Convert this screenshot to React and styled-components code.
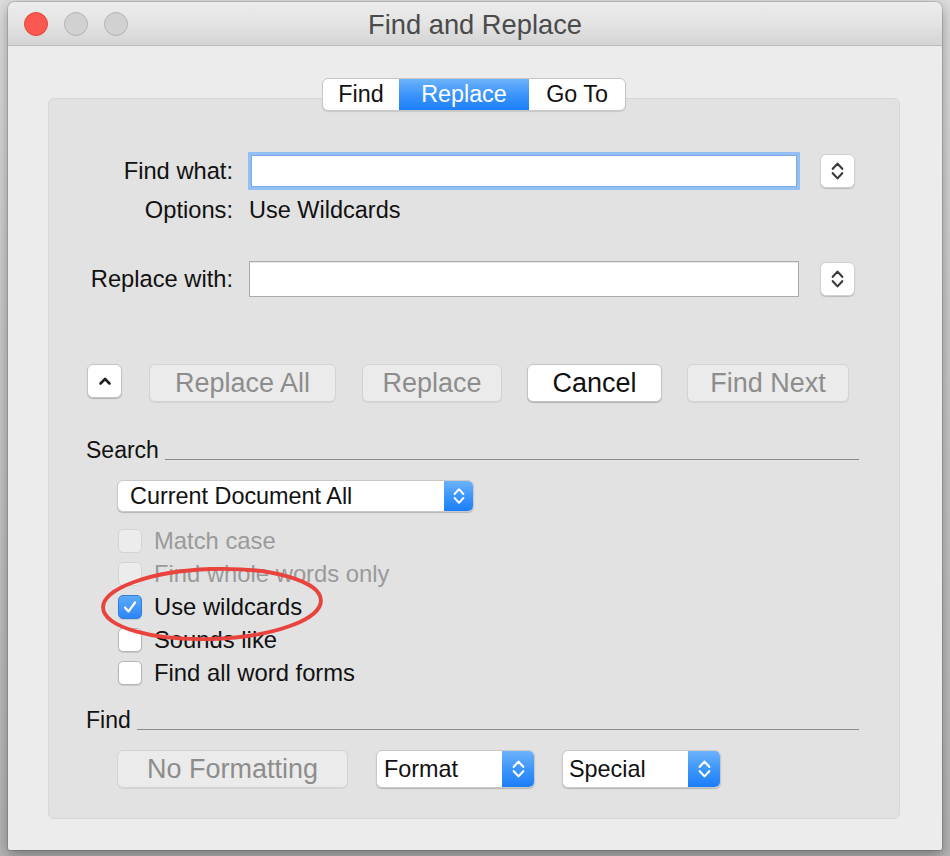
import React from 'react';
import styled, { createGlobalStyle } from 'styled-components';

const Global = createGlobalStyle`
  html, body { margin: 0; padding: 0; }
  body {
    width: 950px; height: 856px; overflow: hidden;
    background: linear-gradient(180deg, #dcdcdc 0%, #c9c9c9 40%, #b4b4b4 100%);
    font-family: "Liberation Sans", Arial, sans-serif;
    -webkit-font-smoothing: antialiased;
  }
`;

const Page = styled.div`
  width: 950px;
  height: 856px;
  box-sizing: border-box;
  padding: 2px 0 0 8px;
`;

const Window = styled.div`
  width: 934px;
  background: #ececec;
  border-radius: 7px 7px 2px 2px;
  box-shadow: 0 0 0 1px rgba(0,0,0,0.12), 0 5px 14px rgba(0,0,0,0.35);
  display: flex;
  flex-direction: column;
  overflow: hidden;
`;

const TitleBar = styled.div`
  height: 43px;
  border-bottom: 1px solid #bababa;
  background: linear-gradient(180deg, #ececec 0%, #e4e4e4 50%, #d4d4d4 100%);
  display: grid;
  grid-template-columns: 1fr auto 1fr;
  align-items: center;
  padding: 0 16px;
`;

const Lights = styled.div`
  display: flex;
  gap: 16px;
`;

const Light = styled.span`
  width: 24px;
  height: 24px;
  border-radius: 50%;
  box-sizing: border-box;
  background: ${p => p.$fill};
  border: 1px solid ${p => p.$edge};
`;

const Title = styled.div`
  font-size: 27.3px;
  color: #4b4b4b;
  margin-top: 2px;
`;

const Content = styled.div`
  padding: 32px 42px 31px 40px;
  display: flex;
  flex-direction: column;
`;

const Tabs = styled.div`
  align-self: center;
  position: relative;
  z-index: 1;
  display: flex;
  height: 33px;
  box-sizing: border-box;
  border: 1px solid #c6c6c6;
  border-radius: 6px;
  background: #fff;
  overflow: hidden;
  box-shadow: 0 1px 1px rgba(0,0,0,0.12);
`;

const Tab = styled.div`
  width: ${p => p.$w}px;
  display: flex;
  align-items: center;
  justify-content: center;
  font-size: 23.3px;
  color: ${p => (p.$active ? '#fff' : '#111')};
  background: ${p => (p.$active ? 'linear-gradient(180deg, #6db3fb 0%, #3c95fa 50%, #1c7ff9 100%)' : 'transparent')};
`;

const Panel = styled.div`
  margin-top: -13px;
  background: #e2e2e2;
  border: 1px solid #d7d7d7;
  border-radius: 6px;
  padding: 53px 40px 30px 38px;
  display: flex;
  flex-direction: column;
`;

const FieldRow = styled.div`
  display: flex;
  align-items: center;
  height: ${p => p.$h}px;
  margin-top: ${p => p.$mt || 0}px;
`;

const FieldLabel = styled.div`
  width: 146px;
  text-align: right;
  font-size: 23.7px;
  color: #111;
  white-space: nowrap;
`;

const FieldValue = styled.div`
  margin-left: 16px;
  font-size: 23.5px;
  color: #111;
`;

const TextField = styled.div`
  box-sizing: border-box;
  background: #fff;
  margin-left: ${p => (p.$focus ? 15 : 16)}px;
  width: ${p => (p.$focus ? 552 : 550)}px;
  height: ${p => (p.$focus ? 38 : 36)}px;
  border: ${p => (p.$focus ? '3px solid #94bff2' : '1px solid #ababab')};
  box-shadow: ${p => (p.$focus ? 'inset 0 0 0 1px #78aceb' : 'inset 0 1px 0 #e8e8e8')};
`;

const Stepper = styled.div`
  margin-left: ${p => p.$ml}px;
  width: 35px;
  height: 34px;
  box-sizing: border-box;
  background: #fff;
  border: 1px solid #cfcfcf;
  border-radius: 6px;
  box-shadow: 0 1px 1px rgba(0,0,0,0.18);
  display: flex;
  align-items: center;
  justify-content: center;
  color: #3a3a3a;
`;

const ButtonRow = styled.div`
  display: flex;
  align-items: flex-start;
  margin-top: 67px;
`;

const PushButton = styled.div`
  box-sizing: border-box;
  width: ${p => p.$w}px;
  height: ${p => p.$h || 38}px;
  margin-left: ${p => p.$ml || 0}px;
  display: flex;
  align-items: center;
  justify-content: center;
  font-size: ${p => p.$fs || 27}px;
  border-radius: 6px;
  color: ${p => (p.$disabled ? '#8d8d8d' : '#111')};
  background: ${p => (p.$disabled ? '#ebebeb' : '#fff')};
  border: 1px solid ${p => (p.$disabled ? '#d3d3d3' : '#c4c4c4')};
  box-shadow: ${p => (p.$disabled ? '0 1px 0 rgba(0,0,0,0.06)' : '0 1px 1px rgba(0,0,0,0.22)')};
`;

const SectionHeader = styled.div`
  display: flex;
  height: 28px;
  margin-top: ${p => p.$mt}px;
  margin-left: -1px;
  font-size: 23px;
  color: #111;
  align-items: center;
`;

const HeaderRule = styled.div`
  flex: 1;
  align-self: flex-end;
  height: 1px;
  background: #8c8c8c;
  margin: 0 0 4px 6px;
`;

const Select = styled.div`
  box-sizing: border-box;
  width: ${p => p.$w}px;
  height: ${p => p.$h}px;
  margin-left: ${p => p.$ml || 0}px;
  margin-top: ${p => p.$mt || 0}px;
  display: flex;
  align-items: stretch;
  background: #fff;
  border: 1px solid #c9c9c9;
  border-radius: 6px;
  box-shadow: 0 1px 1px rgba(0,0,0,0.2);
  overflow: hidden;
`;

const SelectText = styled.div`
  flex: 1;
  display: flex;
  align-items: center;
  padding-left: ${p => p.$pl}px;
  font-size: 23.4px;
  color: #111;
`;

const SelectArrows = styled.div`
  width: ${p => p.$bw}px;
  display: flex;
  align-items: center;
  justify-content: center;
  color: #fff;
  background: linear-gradient(180deg, #6cb2fb 0%, #3d96fa 50%, #1b7ef9 100%);
`;

const CheckList = styled.div`
  position: relative;
  margin-top: 12px;
  padding-left: 31px;
  display: flex;
  flex-direction: column;
`;

const CheckRow = styled.div`
  height: 33px;
  display: flex;
  align-items: center;
  font-size: 23.8px;
  color: ${p => (p.$disabled ? '#9a9a9a' : '#111')};
`;

const Box = styled.div`
  box-sizing: border-box;
  width: 24px;
  height: 24px;
  margin-right: 12px;
  border-radius: 5px;
  display: flex;
  align-items: center;
  justify-content: center;
  background: ${p => (p.$checked ? 'linear-gradient(180deg, #5eaafb 0%, #2c86f7 100%)' : p.$disabled ? '#ececec' : '#fff')};
  border: 1px solid ${p => (p.$checked ? '#2f7fe0' : p.$disabled ? '#d4d4d4' : '#b6b6b6')};
  box-shadow: ${p => (p.$disabled ? 'none' : '0 1px 1px rgba(0,0,0,0.12)')};
`;

const Annotation = styled.svg`
  position: absolute;
  left: 10px;
  top: 36px;
  pointer-events: none;
  overflow: visible;
`;

const BottomRow = styled.div`
  display: flex;
  align-items: center;
  margin-top: 16px;
  padding-left: 30px;
`;

const UpDown = ({ w = 13, h = 22, sw = 2 }) => (
  <svg width={w} height={h} viewBox="0 0 12 20" fill="none" stroke="currentColor" strokeWidth={sw} strokeLinecap="round" strokeLinejoin="round">
    <path d="M1.6 8 L6 3.2 L10.4 8" />
    <path d="M1.6 12 L6 16.8 L10.4 12" />
  </svg>
);

const ChevronUp = () => (
  <svg width="14" height="10" viewBox="0 0 14 10" fill="none" stroke="#1e1e1e" strokeWidth="2.6" strokeLinecap="round" strokeLinejoin="round">
    <path d="M2.5 7.5 L7 3 L11.5 7.5" />
  </svg>
);

const Check = () => (
  <svg width="18" height="18" viewBox="0 0 18 18" fill="none" stroke="#fff" strokeWidth="2.2" strokeLinecap="round" strokeLinejoin="round">
    <path d="M4 9.5 L7.5 13.5 L14 4.5" />
  </svg>
);

const options = [
  { label: 'Match case', disabled: true },
  { label: 'Find whole words only', disabled: true },
  { label: 'Use wildcards', checked: true },
  { label: 'Sounds like' },
  { label: 'Find all word forms' },
];

export default function App() {
  return (
    <>
      <Global />
      <Page>
        <Window>
          <TitleBar>
            <Lights>
              <Light $fill="#fc5852" $edge="#e0443e" />
              <Light $fill="#d1d1d1" $edge="#b4b4b4" />
              <Light $fill="#d1d1d1" $edge="#b4b4b4" />
            </Lights>
            <Title>Find and Replace</Title>
            <span />
          </TitleBar>
          <Content>
            <Tabs>
              <Tab $w={76}>Find</Tab>
              <Tab $w={130} $active>Replace</Tab>
              <Tab $w={96}>Go To</Tab>
            </Tabs>
            <Panel>
              <FieldRow $h={38}>
                <FieldLabel>Find what:</FieldLabel>
                <TextField $focus />
                <Stepper $ml={20}><UpDown /></Stepper>
              </FieldRow>
              <FieldRow $h={28} $mt={6}>
                <FieldLabel>Options:</FieldLabel>
                <FieldValue>Use Wildcards</FieldValue>
              </FieldRow>
              <FieldRow $h={36} $mt={37}>
                <FieldLabel>Replace with:</FieldLabel>
                <TextField />
                <Stepper $ml={21}><UpDown /></Stepper>
              </FieldRow>

              <ButtonRow>
                <PushButton $w={35} $h={34}><ChevronUp /></PushButton>
                <PushButton $w={187} $ml={27} $disabled>Replace All</PushButton>
                <PushButton $w={140} $ml={26} $disabled>Replace</PushButton>
                <PushButton $w={135} $ml={25}>Cancel</PushButton>
                <PushButton $w={162} $ml={25} $disabled>Find Next</PushButton>
              </ButtonRow>

              <SectionHeader $mt={34}>
                Search
                <HeaderRule />
              </SectionHeader>
              <Select $w={357} $h={32} $ml={30} $mt={16}>
                <SelectText $pl={12}>Current Document All</SelectText>
                <SelectArrows $bw={29}><UpDown w={12} h={20} sw={1.9} /></SelectArrows>
              </Select>

              <CheckList>
                {options.map(o => (
                  <CheckRow key={o.label} $disabled={o.disabled}>
                    <Box $checked={o.checked} $disabled={o.disabled}>{o.checked && <Check />}</Box>
                    {o.label}
                  </CheckRow>
                ))}
                <Annotation width="230" height="84" viewBox="0 0 230 84">
                  <ellipse cx="115" cy="44" rx="109" ry="35" transform="rotate(-2 115 44)" fill="none" stroke="#e8433d" strokeWidth="3.8" />
                </Annotation>
              </CheckList>

              <SectionHeader $mt={17}>
                Find
                <HeaderRule />
              </SectionHeader>
              <BottomRow>
                <PushButton $w={231} $disabled>No Formatting</PushButton>
                <Select $w={159} $h={38} $ml={28}>
                  <SelectText $pl={7}>Format</SelectText>
                  <SelectArrows $bw={32}><UpDown /></SelectArrows>
                </Select>
                <Select $w={159} $h={38} $ml={27}>
                  <SelectText $pl={6}>Special</SelectText>
                  <SelectArrows $bw={32}><UpDown /></SelectArrows>
                </Select>
              </BottomRow>
            </Panel>
          </Content>
        </Window>
      </Page>
    </>
  );
}
